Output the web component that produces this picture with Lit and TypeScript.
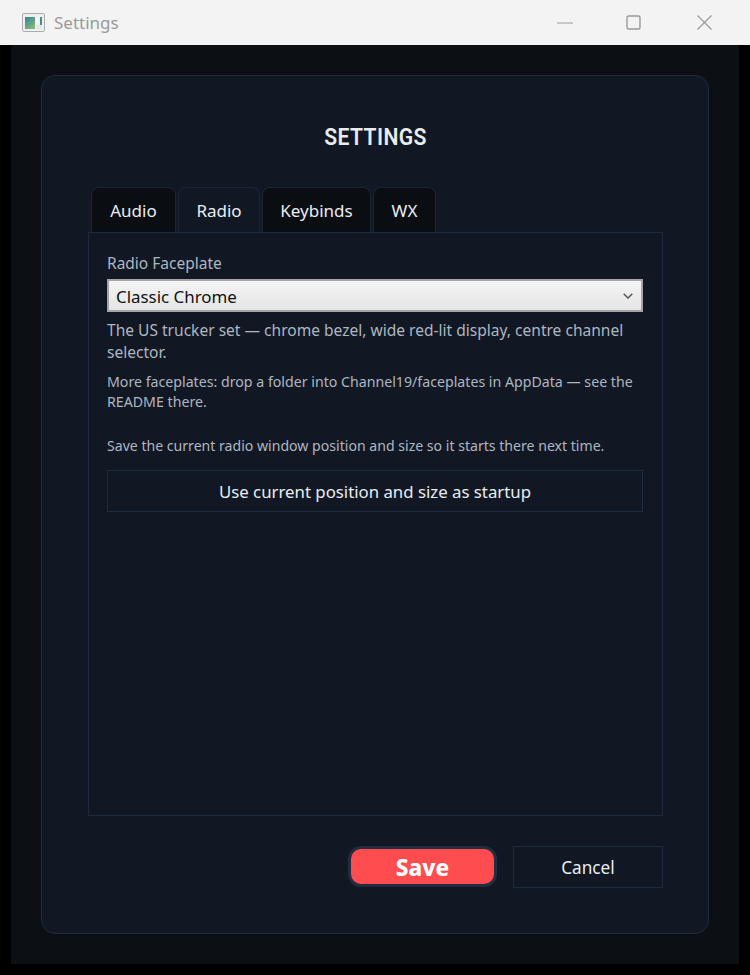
import { LitElement, html, css } from "lit";
import { customElement } from "lit/decorators.js";

@customElement("app-root")
export class AppRoot extends LitElement {
  static styles = css`
    :host { display: flex; flex-direction: column; width: 750px; height: 975px; background: #000; font-family: "Noto Sans", "Open Sans", sans-serif; overflow: hidden; }
    .titlebar { height: 45px; flex: none; background: #f3f3f3; display: flex; align-items: center; }
    .appicon { margin-left: 22px; width: 23px; height: 19px; flex: none; margin-top: -1px; }
    .wintitle { margin-left: 9px; font-size: 17px; color: #9a9a9a; flex: 1; }
    .ctl { width: 15px; height: 15px; flex: none; display: block; }
    .ctl.min { width: 16px; margin-right: 53px; }
    .ctl.max { margin-right: 56px; }
    .ctls { display: flex; padding-right: 38px; align-items: center; margin-top: -1px; }
    .outer { flex: none; height: 919px; margin: 0 11px; background: #0c0f13; padding: 30px; box-sizing: border-box; }
    .card { height: 859px; box-sizing: border-box; background: #111824; border: 1px solid #1f2b3e; border-radius: 14px; padding: 40px 45px 45px 46px; display: flex; flex-direction: column; }
    h1 { margin: 0; height: 71px; text-align: center; font-family: "Roboto", sans-serif; font-size: 24px; line-height: 42px; font-weight: 600; color: #e8ebef; letter-spacing: 0.45px; transform: scaleX(0.88); }
    .tabs { display: flex; gap: 2px; padding-left: 3px; height: 45px; flex: none; }
    .tab { box-sizing: border-box; height: 45px; display: flex; align-items: center; justify-content: center; background: #0a0d12; border: 1px solid #1a2535; border-bottom: none; border-radius: 8px 8px 0 0; color: #e8edf2; font-size: 17px; }
    .tab.active { background: #111824; }
    .t-audio { width: 85px; }
    .t-radio { width: 82px; }
    .t-keys { width: 109px; }
    .t-wx { width: 63px; }
    .panel { flex: none; height: 584px; box-sizing: border-box; border: 1px solid #1f2c40; padding: 19px 19px 0 18px; display: flex; flex-direction: column; }
    .label { font-size: 15.5px; line-height: 22px; color: #aeb6c0; height: 25px; }
    .select { height: 33px; box-sizing: border-box; border: 2px solid #a4a4a4; background: linear-gradient(#f4f4f4, #e5e5e5); display: flex; align-items: center; justify-content: space-between; padding: 1px 8px 0 7px; color: #111; font-size: 16.9px; margin-top: 2px; }
    .select svg { width: 10px; height: 6px; display: block; margin-top: -1px; }
    .desc { margin: 7px 0 0; font-size: 15.56px; line-height: 22px; color: #aeb6c0; }
    .note { margin: 9px 0 0; font-size: 14.18px; line-height: 20px; color: #aeb6c0; }
    .note.save { margin-top: 24px; font-size: 14.1px; }
    .btn { box-sizing: border-box; border: 1px solid #1f2c40; display: flex; align-items: center; justify-content: center; color: #e8edf2; }
    .use { height: 42px; margin-top: 14px; font-size: 16.8px; }
    .footer { display: flex; justify-content: flex-end; align-items: flex-start; gap: 16px; margin-top: 30px; }
    .save-btn { width: 149px; height: 41px; box-sizing: border-box; border: 3px solid #222d40; border-radius: 13px; background: #ff4d4f; color: #fff; font-size: 22.5px; font-weight: 800; display: flex; align-items: center; justify-content: center; padding-top: 2px; }
    .cancel { width: 150px; height: 42px; font-size: 17.2px; }
  `;

  render() {
    return html`
      <div class="titlebar">
        <svg class="appicon" viewBox="0 0 23 19">
          <rect x="0.5" y="0.5" width="22" height="18" rx="1.5" fill="#eef0f0" stroke="#a9adb0"/>
          <defs><linearGradient id="g" x1="0" y1="0" x2="0.6" y2="1"><stop offset="0" stop-color="#3a7f96"/><stop offset="1" stop-color="#7cb87f"/></linearGradient></defs>
          <rect x="3" y="4" width="10" height="12" fill="url(#g)"/>
          <rect x="14" y="4" width="3" height="8" fill="#f4f6f5"/>
          <rect x="18" y="4" width="2" height="8" fill="#4a8a8a"/>
          <rect x="14" y="12" width="6" height="4" fill="#e3e8e2"/>
        </svg>
        <div class="wintitle">Settings</div>
        <div class="ctls">
          <svg class="ctl min" viewBox="0 0 16 15"><path d="M0 8H16" stroke="#9a9a9a" stroke-width="1" fill="none"/></svg>
          <svg class="ctl max" viewBox="0 0 15 15"><rect x="1" y="1" width="13" height="13" rx="1.5" stroke="#9a9a9a" stroke-width="1.4" fill="none"/></svg>
          <svg class="ctl" viewBox="0 0 15 15"><path d="M0.5 0.5L14.5 14.5M14.5 0.5L0.5 14.5" stroke="#9a9a9a" stroke-width="1.2" fill="none"/></svg>
        </div>
      </div>
      <div class="outer">
        <div class="card">
          <h1>SETTINGS</h1>
          <div class="tabs">
            <div class="tab t-audio">Audio</div>
            <div class="tab active t-radio">Radio</div>
            <div class="tab t-keys">Keybinds</div>
            <div class="tab t-wx">WX</div>
          </div>
          <div class="panel">
            <div class="label">Radio Faceplate</div>
            <div class="select"><span>Classic Chrome</span>
              <svg viewBox="0 0 10 6"><path d="M0.7 0.7L5 5L9.3 0.7" stroke="#5c5c5c" stroke-width="1.6" fill="none"/></svg>
            </div>
            <p class="desc">The US trucker set — chrome bezel, wide red-lit display, centre channel selector.</p>
            <p class="note">More faceplates: drop a folder into Channel19/faceplates in AppData — see the README there.</p>
            <p class="note save">Save the current radio window position and size so it starts there next time.</p>
            <div class="btn use">Use current position and size as startup</div>
          </div>
          <div class="footer">
            <div class="save-btn">Save</div>
            <div class="btn cancel">Cancel</div>
          </div>
        </div>
      </div>
    `;
  }
}
